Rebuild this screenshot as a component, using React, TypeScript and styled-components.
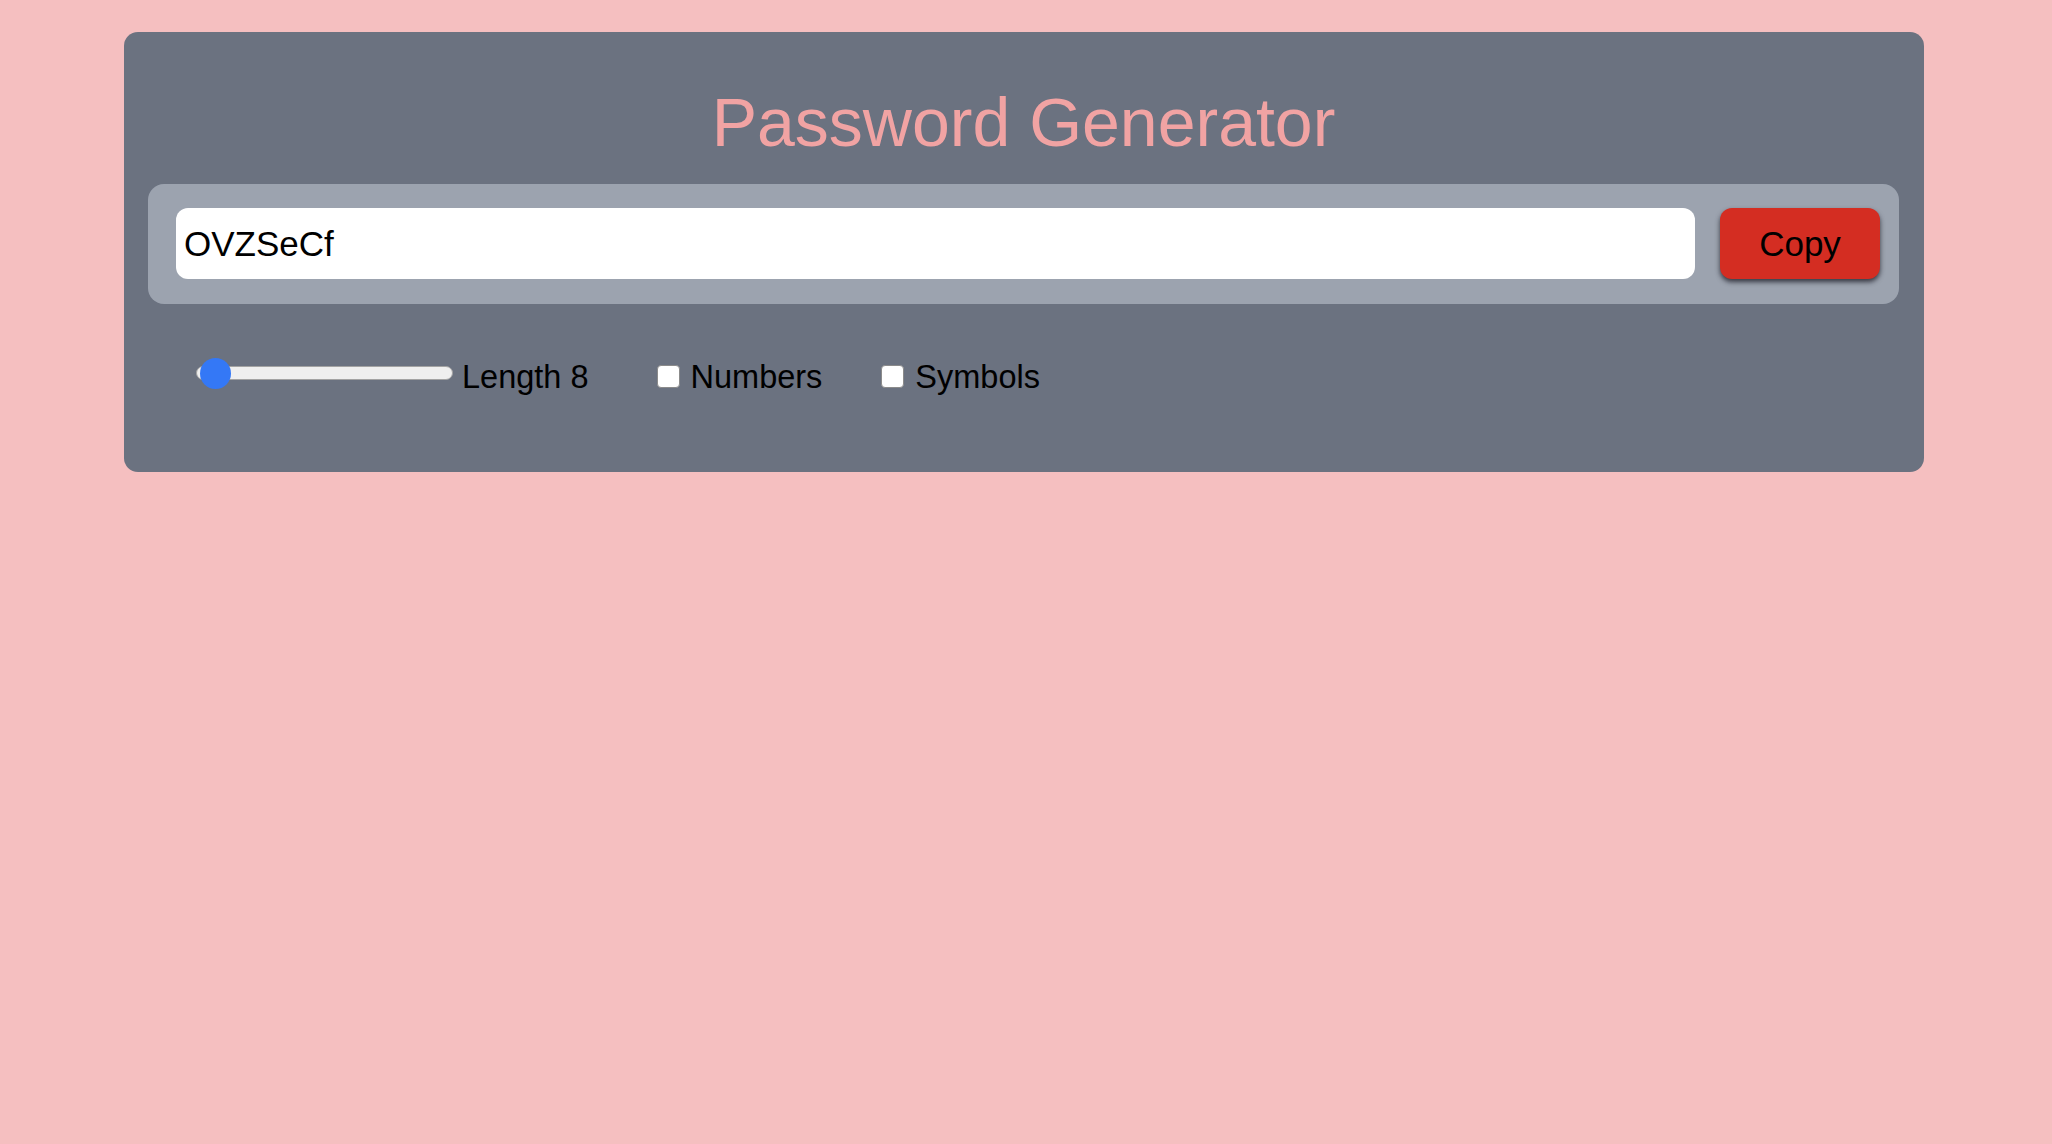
import React, { useState } from 'react';
import styled, { createGlobalStyle } from 'styled-components';

const GlobalStyle = createGlobalStyle`
  html, body {
    margin: 0;
    padding: 0;
    background: #f5bfc0;
    font-family: "Liberation Sans", Arial, sans-serif;
  }
  * {
    box-sizing: border-box;
  }
`;

const Page = styled.div`
  min-height: 1144px;
  padding: 32px 0 0 124px;
`;

const Card = styled.div`
  width: 1800px;
  background: #6b7280;
  border-radius: 14px;
  padding: 54px 25px 70px 24px;
`;

const Title = styled.h1`
  margin: 0 0 26px;
  text-align: center;
  font-size: 68px;
  line-height: 72px;
  font-weight: 400;
  color: #f1a3a3;
`;

const OutputBar = styled.div`
  display: flex;
  align-items: center;
  gap: 25px;
  background: #9ca3af;
  border-radius: 16px;
  padding: 24px 19px 25px 28px;
`;

const PasswordField = styled.input`
  flex: 1;
  height: 71px;
  border: none;
  outline: none;
  border-radius: 12px;
  background: #fff;
  padding: 0 8px;
  font-family: inherit;
  font-size: 35px;
  color: #000;
`;

const CopyButton = styled.button`
  width: 160px;
  height: 71px;
  border: none;
  border-radius: 12px;
  background: #d42d22;
  color: #000;
  font-family: inherit;
  font-size: 35px;
  box-shadow: 0 3px 5px rgba(20, 20, 30, 0.75);
  cursor: pointer;
`;

const Options = styled.div`
  display: flex;
  align-items: center;
  height: 50px;
  margin-top: 48px;
  padding-left: 48px;
`;

const Field = styled.label<{ $gap: number; $after?: number }>`
  display: flex;
  align-items: center;
  gap: ${(p) => p.$gap}px;
  margin-right: ${(p) => p.$after ?? 0}px;
  font-size: 32.5px;
  color: #000;
`;

const Range = styled.input`
  -webkit-appearance: none;
  appearance: none;
  width: 257px;
  height: 14px;
  margin: 0 0 8px;
  border: 1px solid #a3a3a3;
  border-radius: 7px;
  background: #efefef;
  outline: none;

  &::-webkit-slider-thumb {
    -webkit-appearance: none;
    appearance: none;
    width: 31px;
    height: 31px;
    border-radius: 50%;
    background: #3478f6;
    border: none;
    margin-left: 3px;
  }
`;

const Check = styled.input`
  -webkit-appearance: none;
  appearance: none;
  width: 23px;
  height: 23px;
  margin: 0 0 2px;
  background: #fff;
  border: 1px solid #8b8b8b;
  border-radius: 4px;
`;

export default function App() {
  const [length, setLength] = useState(8);
  const [numbers, setNumbers] = useState(false);
  const [symbols, setSymbols] = useState(false);

  return (
    <Page>
      <GlobalStyle />
      <Card>
        <Title>Password Generator</Title>
        <OutputBar>
          <PasswordField type="text" value="OVZSeCf" readOnly />
          <CopyButton>Copy</CopyButton>
        </OutputBar>
        <Options>
          <Field $gap={9} $after={68}>
            <Range
              type="range"
              min={8}
              max={100}
              value={length}
              onChange={(e) => setLength(Number(e.target.value))}
            />
            Length {length}
          </Field>
          <Field $gap={11} $after={59}>
            <Check type="checkbox" checked={numbers} onChange={() => setNumbers(!numbers)} />
            Numbers
          </Field>
          <Field $gap={11}>
            <Check type="checkbox" checked={symbols} onChange={() => setSymbols(!symbols)} />
            Symbols
          </Field>
        </Options>
      </Card>
    </Page>
  );
}
